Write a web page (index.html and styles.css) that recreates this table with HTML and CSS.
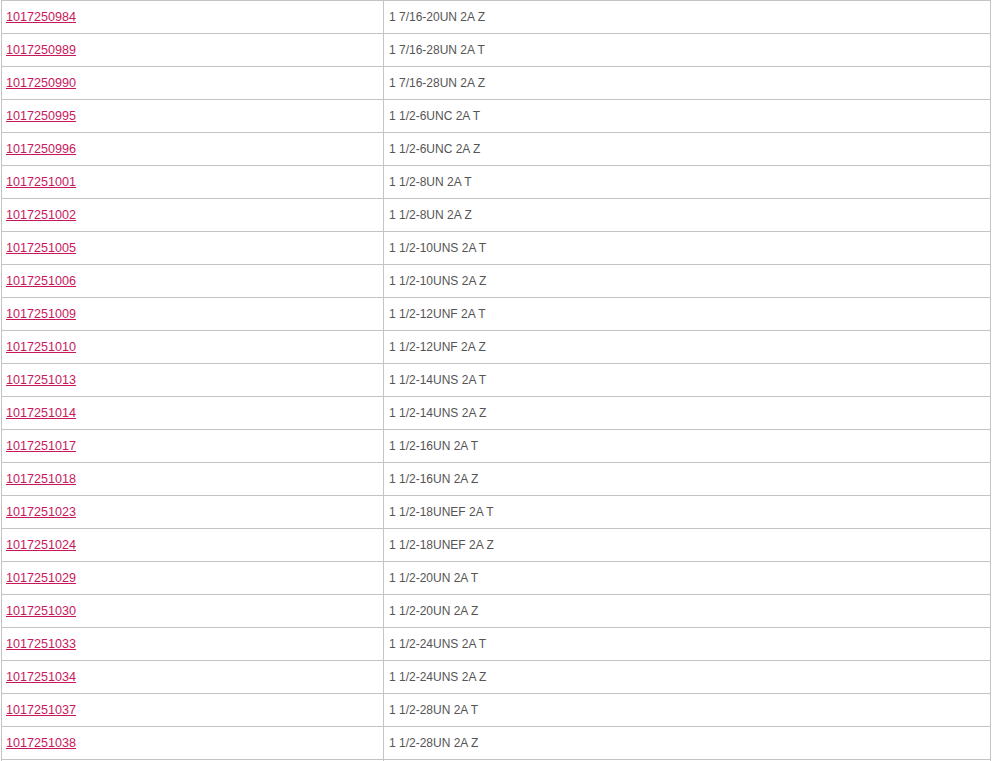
FILE: index.html
```html
<!DOCTYPE html>
<html>
<head>
<meta charset="utf-8">
<link rel="stylesheet" href="styles.css">
</head>
<body>
<div class="wrap">
<table class="parts">
<tbody>
<tr><td class="c1"><a href="#">1017250984</a></td><td class="c2">1 7/16-20UN 2A Z</td></tr>
<tr><td class="c1"><a href="#">1017250989</a></td><td class="c2">1 7/16-28UN 2A T</td></tr>
<tr><td class="c1"><a href="#">1017250990</a></td><td class="c2">1 7/16-28UN 2A Z</td></tr>
<tr><td class="c1"><a href="#">1017250995</a></td><td class="c2">1 1/2-6UNC 2A T</td></tr>
<tr><td class="c1"><a href="#">1017250996</a></td><td class="c2">1 1/2-6UNC 2A Z</td></tr>
<tr><td class="c1"><a href="#">1017251001</a></td><td class="c2">1 1/2-8UN 2A T</td></tr>
<tr><td class="c1"><a href="#">1017251002</a></td><td class="c2">1 1/2-8UN 2A Z</td></tr>
<tr><td class="c1"><a href="#">1017251005</a></td><td class="c2">1 1/2-10UNS 2A T</td></tr>
<tr><td class="c1"><a href="#">1017251006</a></td><td class="c2">1 1/2-10UNS 2A Z</td></tr>
<tr><td class="c1"><a href="#">1017251009</a></td><td class="c2">1 1/2-12UNF 2A T</td></tr>
<tr><td class="c1"><a href="#">1017251010</a></td><td class="c2">1 1/2-12UNF 2A Z</td></tr>
<tr><td class="c1"><a href="#">1017251013</a></td><td class="c2">1 1/2-14UNS 2A T</td></tr>
<tr><td class="c1"><a href="#">1017251014</a></td><td class="c2">1 1/2-14UNS 2A Z</td></tr>
<tr><td class="c1"><a href="#">1017251017</a></td><td class="c2">1 1/2-16UN 2A T</td></tr>
<tr><td class="c1"><a href="#">1017251018</a></td><td class="c2">1 1/2-16UN 2A Z</td></tr>
<tr><td class="c1"><a href="#">1017251023</a></td><td class="c2">1 1/2-18UNEF 2A T</td></tr>
<tr><td class="c1"><a href="#">1017251024</a></td><td class="c2">1 1/2-18UNEF 2A Z</td></tr>
<tr><td class="c1"><a href="#">1017251029</a></td><td class="c2">1 1/2-20UN 2A T</td></tr>
<tr><td class="c1"><a href="#">1017251030</a></td><td class="c2">1 1/2-20UN 2A Z</td></tr>
<tr><td class="c1"><a href="#">1017251033</a></td><td class="c2">1 1/2-24UNS 2A T</td></tr>
<tr><td class="c1"><a href="#">1017251034</a></td><td class="c2">1 1/2-24UNS 2A Z</td></tr>
<tr><td class="c1"><a href="#">1017251037</a></td><td class="c2">1 1/2-28UN 2A T</td></tr>
<tr><td class="c1"><a href="#">1017251038</a></td><td class="c2">1 1/2-28UN 2A Z</td></tr>
<tr><td class="c1"></td><td class="c2"></td></tr>
</tbody>
</table>
</div>
</body>
</html>
```
FILE: styles.css
```css
html, body {
  margin: 0;
  padding: 0;
  background: #ffffff;
  height: 761px;
  overflow: hidden;
}
.wrap {
  padding-left: 1px;
}
.parts {
  border-collapse: collapse;
  width: 990px;
  table-layout: fixed;
  font-family: "Liberation Sans", Arial, sans-serif;
  font-size: 12px;
}
.parts td {
  border: 1px solid #c4c4c4;
  height: 33px;
  padding: 0 5px;
  box-sizing: border-box;
  vertical-align: middle;
}
.parts td.c1 {
  width: 382px;
  padding-left: 4px;
}
.parts td.c2 {
  color: #555555;
}
.parts a {
  color: #c8185c;
  font-size: 12.6px;
  text-decoration: underline;
}
```
